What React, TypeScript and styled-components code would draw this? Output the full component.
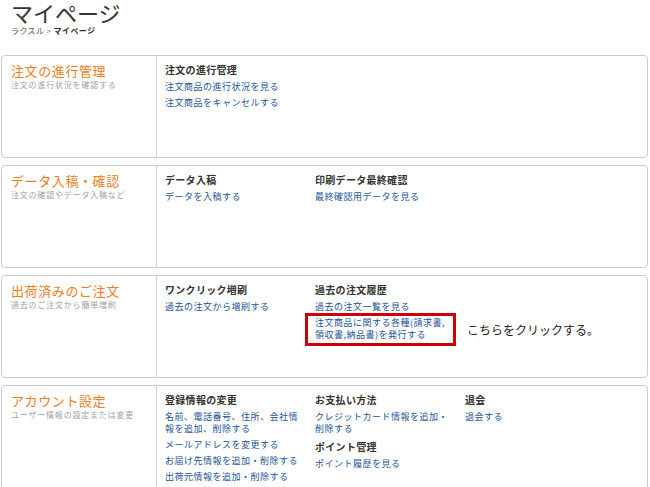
import React from 'react';
import styled, { createGlobalStyle } from 'styled-components';

const GlobalStyle = createGlobalStyle`
  html, body {
    margin: 0;
    padding: 0;
    background: #ffffff;
  }
  body {
    font-family: "Noto Sans CJK JP", "Noto Sans", sans-serif;
    color: #333333;
  }
`;

type LinkGroup = {
  heading: string;
  links: string[];
};

type Section = {
  title: string;
  subtitle: string;
  columns: LinkGroup[][];
};

const HIGHLIGHT = 'HIGHLIGHT';

const sections: Section[] = [
  {
    title: '注文の進行管理',
    subtitle: '注文の進行状況を確認する',
    columns: [
      [{ heading: '注文の進行管理', links: ['注文商品の進行状況を見る', '注文商品をキャンセルする'] }],
    ],
  },
  {
    title: 'データ入稿・確認',
    subtitle: '注文の確認やデータ入稿など',
    columns: [
      [{ heading: 'データ入稿', links: ['データを入稿する'] }],
      [{ heading: '印刷データ最終確認', links: ['最終確認用データを見る'] }],
    ],
  },
  {
    title: '出荷済みのご注文',
    subtitle: '過去のご注文から簡単増刷',
    columns: [
      [{ heading: 'ワンクリック増刷', links: ['過去の注文から増刷する'] }],
      [{ heading: '過去の注文履歴', links: ['過去の注文一覧を見る', HIGHLIGHT] }],
    ],
  },
  {
    title: 'アカウント設定',
    subtitle: 'ユーザー情報の設定または変更',
    columns: [
      [
        {
          heading: '登録情報の変更',
          links: [
            '名前、電話番号、住所、会社情報を追加、削除する',
            'メールアドレスを変更する',
            'お届け先情報を追加・削除する',
            '出荷元情報を追加・削除する',
          ],
        },
      ],
      [
        { heading: 'お支払い方法', links: ['クレジットカード情報を追加・削除する'] },
        { heading: 'ポイント管理', links: ['ポイント履歴を見る'] },
      ],
      [{ heading: '退会', links: ['退会する'] }],
    ],
  },
];

const App: React.FC = () => (
  <>
    <GlobalStyle />
    <Page>
      <Header>
        <Title>マイページ</Title>
        <Breadcrumb>
          ラクスル <Sep>&gt;</Sep> <Current>マイページ</Current>
        </Breadcrumb>
      </Header>
      <Panels>
        {sections.map((s) => (
          <Panel key={s.title}>
            <Side>
              <SideTitle>{s.title}</SideTitle>
              <SideSub>{s.subtitle}</SideSub>
            </Side>
            <Body>
              {s.columns.map((col, ci) => (
                <Column key={ci}>
                  {col.map((g, gi) => (
                    <Group key={g.heading} first={gi === 0}>
                      <GroupHeading>{g.heading}</GroupHeading>
                      {g.links.map((l, li) =>
                        l === HIGHLIGHT ? (
                          <Highlight key={li}>
                            <LinkItem href="#">
                              注文商品に関する各種(請求書,
                              <br />
                              領収書,納品書)を発行する
                            </LinkItem>
                            <Callout>こちらをクリックする。</Callout>
                          </Highlight>
                        ) : (
                          <LinkItem key={li} href="#">
                            {l}
                          </LinkItem>
                        )
                      )}
                    </Group>
                  ))}
                </Column>
              ))}
            </Body>
          </Panel>
        ))}
      </Panels>
    </Page>
  </>
);

const Page = styled.div`
  width: 650px;
  height: 487px;
  overflow: hidden;
  padding: 0 2px 0 1px;
  box-sizing: border-box;
`;

const Header = styled.div`
  padding: 0 10px;
  height: 55px;
`;

const Title = styled.h1`
  margin: 0;
  font-size: 22px;
  font-weight: 400;
  line-height: 25px;
  color: #333333;
`;

const Breadcrumb = styled.div`
  font-size: 8px;
  line-height: 11px;
  color: #555555;
  letter-spacing: 0.4px;
`;

const Sep = styled.span`
  color: #777777;
`;

const Current = styled.span`
  font-weight: 700;
  color: #333333;
`;

const Panels = styled.div`
  display: flex;
  flex-direction: column;
  gap: 7px;
`;

const Panel = styled.section`
  display: flex;
  min-height: 101px;
  border: 1px solid #cccccc;
  border-radius: 4px;
  background: #ffffff;
`;

const Side = styled.div`
  width: 145px;
  flex-shrink: 0;
  padding: 6px 0 0 9px;
  border-right: 1px solid #d3d3d3;
`;

const SideTitle = styled.div`
  font-size: 13px;
  line-height: 18px;
  color: #ef7d22;
  letter-spacing: 0.6px;
`;

const SideSub = styled.div`
  font-size: 8px;
  line-height: 10px;
  color: #a0a0a0;
  letter-spacing: 0.8px;
`;

const Body = styled.div`
  display: flex;
  gap: 10px;
  padding: 7px 0 6px 8px;
`;

const Column = styled.div`
  width: 140px;
  display: flex;
  flex-direction: column;
`;

const Group = styled.div<{ first: boolean }>`
  display: flex;
  flex-direction: column;
  margin-top: ${(p) => (p.first ? '0' : '5px')};
`;

const GroupHeading = styled.div`
  font-size: 10px;
  line-height: 14px;
  font-weight: 700;
  color: #333333;
  letter-spacing: 0.3px;
`;

const LinkItem = styled.a`
  display: block;
  margin-top: 4px;
  font-size: 9px;
  line-height: 12px;
  color: #23549a;
  text-decoration: none;
  letter-spacing: 0.5px;
`;

const Highlight = styled.div`
  position: relative;

  &::before {
    content: '';
    position: absolute;
    left: -10px;
    right: -1px;
    top: 0;
    bottom: -5px;
    border: 3px solid #cc0000;
  }
`;

const Callout = styled.span`
  position: absolute;
  left: 152px;
  top: 9px;
  font-size: 12px;
  line-height: 16px;
  color: #222222;
  white-space: nowrap;
`;

export default App;
